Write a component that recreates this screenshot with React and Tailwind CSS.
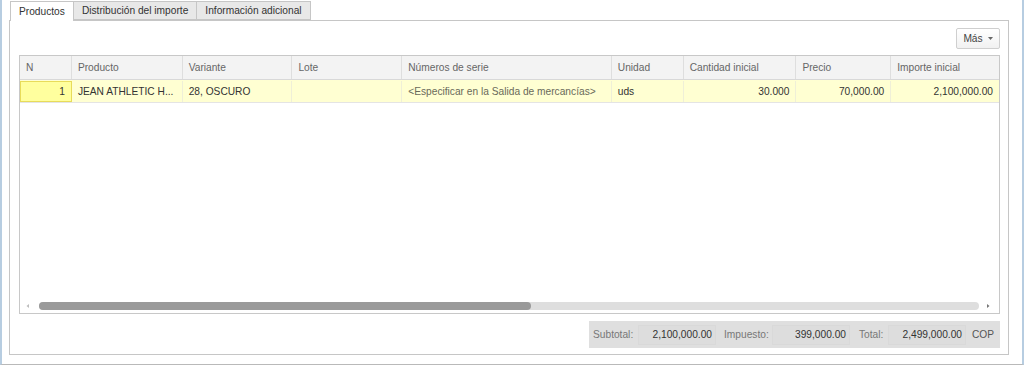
import React from "react";

const columns = [
  { key: "n", label: "N", width: 52 },
  { key: "producto", label: "Producto", width: 111 },
  { key: "variante", label: "Variante", width: 110 },
  { key: "lote", label: "Lote", width: 110 },
  { key: "serie", label: "Números de serie", width: 210 },
  { key: "unidad", label: "Unidad", width: 72 },
  { key: "cantidad", label: "Cantidad inicial", width: 113 },
  { key: "precio", label: "Precio", width: 95 },
  { key: "importe", label: "Importe inicial", width: 108 },
];

const row = {
  n: "1",
  producto: "JEAN ATHLETIC H...",
  variante: "28, OSCURO",
  lote: "",
  serie: "<Especificar en la Salida de mercancías>",
  unidad: "uds",
  cantidad: "30.000",
  precio: "70,000.00",
  importe: "2,100,000.00",
};

const rightAligned = ["n", "cantidad", "precio", "importe"];

function Tabs() {
  return (
    <div className="flex h-[20px] items-end pl-[8px] pt-[1px]">
      <div className="relative z-10 -mb-px flex h-[20px] items-center border border-b-0 border-[#c6c6c6] bg-white px-[8px]">
        Productos
      </div>
      <div className="flex h-[19px] items-center border border-l-0 border-[#c6c6c6] bg-[#e8e8e8] px-[8px]">
        Distribución del importe
      </div>
      <div className="flex h-[19px] items-center border border-l-0 border-[#c6c6c6] bg-[#e8e8e8] px-[8px]">
        Información adicional
      </div>
    </div>
  );
}

function Grid() {
  return (
    <div className="flex h-[259px] w-[981px] flex-col border border-[#c8c8c8] bg-white">
      <div className="flex h-[24px] border-b border-[#d8d8d8] bg-[#f3f3f3] text-[#666]">
        {columns.map((c) => (
          <div
            key={c.key}
            className="flex items-center border-r border-[#dedede] px-[6px] last:border-r-0"
            style={{ width: c.width }}
          >
            {c.label}
          </div>
        ))}
      </div>
      <div className="flex h-[23px] border-b border-[#e4e4e4] bg-[#ffffd2] pt-px text-[#333]">
        {columns.map((c) =>
          c.key === "n" ? (
            <div
              key={c.key}
              className="flex items-center justify-end border border-[#e8dc5a] bg-[#ffff9e] px-[6px]"
              style={{ width: c.width }}
            >
              {row[c.key]}
            </div>
          ) : (
            <div
              key={c.key}
              className={
                "flex items-center whitespace-nowrap border-r border-[#efefd8] px-[6px] last:border-r-0 " +
                (rightAligned.includes(c.key) ? "justify-end" : "") +
                (c.key === "serie" ? " text-[#6a6a5a]" : "")
              }
              style={{ width: c.width }}
            >
              {row[c.key]}
            </div>
          )
        )}
      </div>
      <div className="flex-1" />
      <div className="flex h-[12px] items-center pb-[2px] pl-[5px] pr-[8px]">
        <svg width="6" height="6" viewBox="0 0 6 6" className="mr-[8px]">
          <path d="M4 1 L1.5 3 L4 5 Z" fill="#bdbdbd" />
        </svg>
        <div className="flex h-[8px] flex-1 rounded-full bg-[#dedede]">
          <div className="h-[8px] w-[492px] rounded-full bg-[#9a9a9a]" />
        </div>
        <svg width="6" height="6" viewBox="0 0 6 6" className="ml-[6px]">
          <path d="M2 1 L4.5 3 L2 5 Z" fill="#777" />
        </svg>
      </div>
    </div>
  );
}

function Field({ children, width }) {
  return (
    <div
      className="flex h-[20px] items-center justify-end border border-[#d9d9d9] bg-[#dddddd] px-[3px] text-[#333]"
      style={{ width }}
    >
      {children}
    </div>
  );
}

function Totals() {
  return (
    <div className="flex h-[27px] w-[411px] items-center bg-[#dfdfdf] pl-[4px] text-[#777]">
      <span className="w-[45px]">Subtotal:</span>
      <Field width={78}>2,100,000.00</Field>
      <span className="ml-[8px] w-[48px]">Impuesto:</span>
      <Field width={78}>399,000.00</Field>
      <span className="ml-[9px] w-[29px]">Total:</span>
      <Field width={78}>2,499,000.00</Field>
      <span className="ml-[6px] text-[#555]">COP</span>
    </div>
  );
}

export default function App() {
  return (
    <div
      className="h-[365px] w-[1024px] border-b border-l-2 border-r-2 border-b-[#b9b9b9] border-l-[#b7cde1] border-r-[#b7cde1] bg-white text-[10.2px] text-[#333]"
      style={{ fontFamily: '"Liberation Sans", Arial, sans-serif' }}
    >
      <Tabs />
      <div className="ml-[7px] flex h-[335px] w-[1000px] flex-col border border-[#c6c6c6] bg-white pl-[9px] pr-[8px] pt-[7px]">
        <div className="flex justify-end">
          <button className="flex h-[21px] w-[44px] items-center justify-center gap-[5px] rounded-[2px] border border-[#cfcfcf] bg-gradient-to-b from-white to-[#f1f1f1] text-[#444]">
            Más
            <svg width="5" height="3" viewBox="0 0 5 3">
              <path d="M0 0 H5 L2.5 3 Z" fill="#666" />
            </svg>
          </button>
        </div>
        <div className="mt-[6px]">
          <Grid />
        </div>
        <div className="mt-[7px] flex justify-end">
          <Totals />
        </div>
      </div>
    </div>
  );
}
